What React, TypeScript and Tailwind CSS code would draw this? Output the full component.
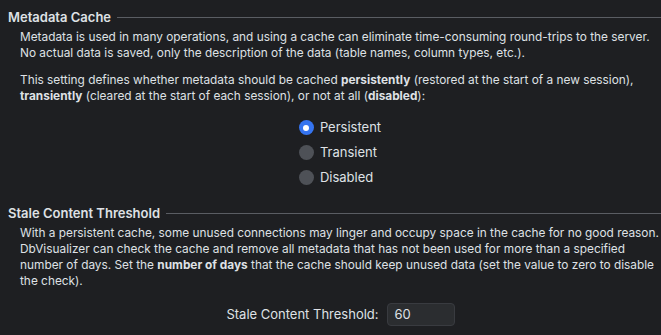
const font = { fontFamily: "Inter, 'Noto Sans', sans-serif" };

function SectionTitle({ title }: { title: string }) {
  return (
    <div className="flex items-center gap-[6px] pl-2">
      <h2 className="whitespace-nowrap text-[13px] font-semibold leading-4 text-[#dfe1e5]">{title}</h2>
      <div className="mt-[1px] h-px flex-1 bg-[#5a5d63]" />
    </div>
  );
}

function Radio({ label, checked }: { label: string; checked?: boolean }) {
  return (
    <div className="flex h-[25px] items-center gap-[6px]">
      {checked ? (
        <span className="grid size-[15px] place-items-center rounded-full bg-[#3574f0]">
          <span className="size-[6px] rounded-full bg-white" />
        </span>
      ) : (
        <span className="size-[15px] rounded-full bg-[#4e5157]" />
      )}
      <span className="text-[13px] text-[#dfe1e5]">{label}</span>
    </div>
  );
}

export default function App() {
  return (
    <div className="h-[335px] w-[661px] overflow-hidden bg-[#1e1f22] pt-[9px]" style={font}>
      <SectionTitle title="Metadata Cache" />
      <div className="mt-[4px] whitespace-nowrap pl-5 text-[11.85px] leading-4 text-[#dfe1e5]">
        <p>
          Metadata is used in many operations, and using a cache can eliminate time-consuming round-trips to the server.
          <br />
          No actual data is saved, only the description of the data (table names, column types, etc.).
        </p>
        <p className="mt-[11px]">
          This setting defines whether metadata should be cached <b>persistently</b> (restored at the start of a new session),
          <br />
          <b>transiently</b> (cleared at the start of each session), or not at all (<b>disabled</b>):
        </p>
      </div>
      <div className="mt-[11px] flex justify-center pl-[19px]">
        <div className="flex flex-col">
          <Radio label="Persistent" checked />
          <Radio label="Transient" />
          <Radio label="Disabled" />
        </div>
      </div>
      <div className="mt-[15px]">
        <SectionTitle title="Stale Content Threshold" />
      </div>
      <div className="mt-[4px] whitespace-nowrap pl-5 text-[11.85px] leading-4 text-[#dfe1e5]">
        <p>
          With a persistent cache, some unused connections may linger and occupy space in the cache for no good reason.
          <br />
          DbVisualizer can check the cache and remove all metadata that has not been used for more than a specified
          <br />
          number of days. Set the <b>number of days</b> that the cache should keep unused data (set the value to zero to disable
          <br />
          the check).
        </p>
      </div>
      <div className="mt-[14px] flex items-center justify-center gap-[8px] pl-[20px]">
        <span className="text-[13px] text-[#dfe1e5]">Stale Content Threshold:</span>
        <div className="flex h-[23px] w-[68px] items-center rounded-[4px] border border-[#393b40] bg-[#2b2d30] px-[7px] text-[13px] text-[#dfe1e5]">
          60
        </div>
      </div>
    </div>
  );
}
